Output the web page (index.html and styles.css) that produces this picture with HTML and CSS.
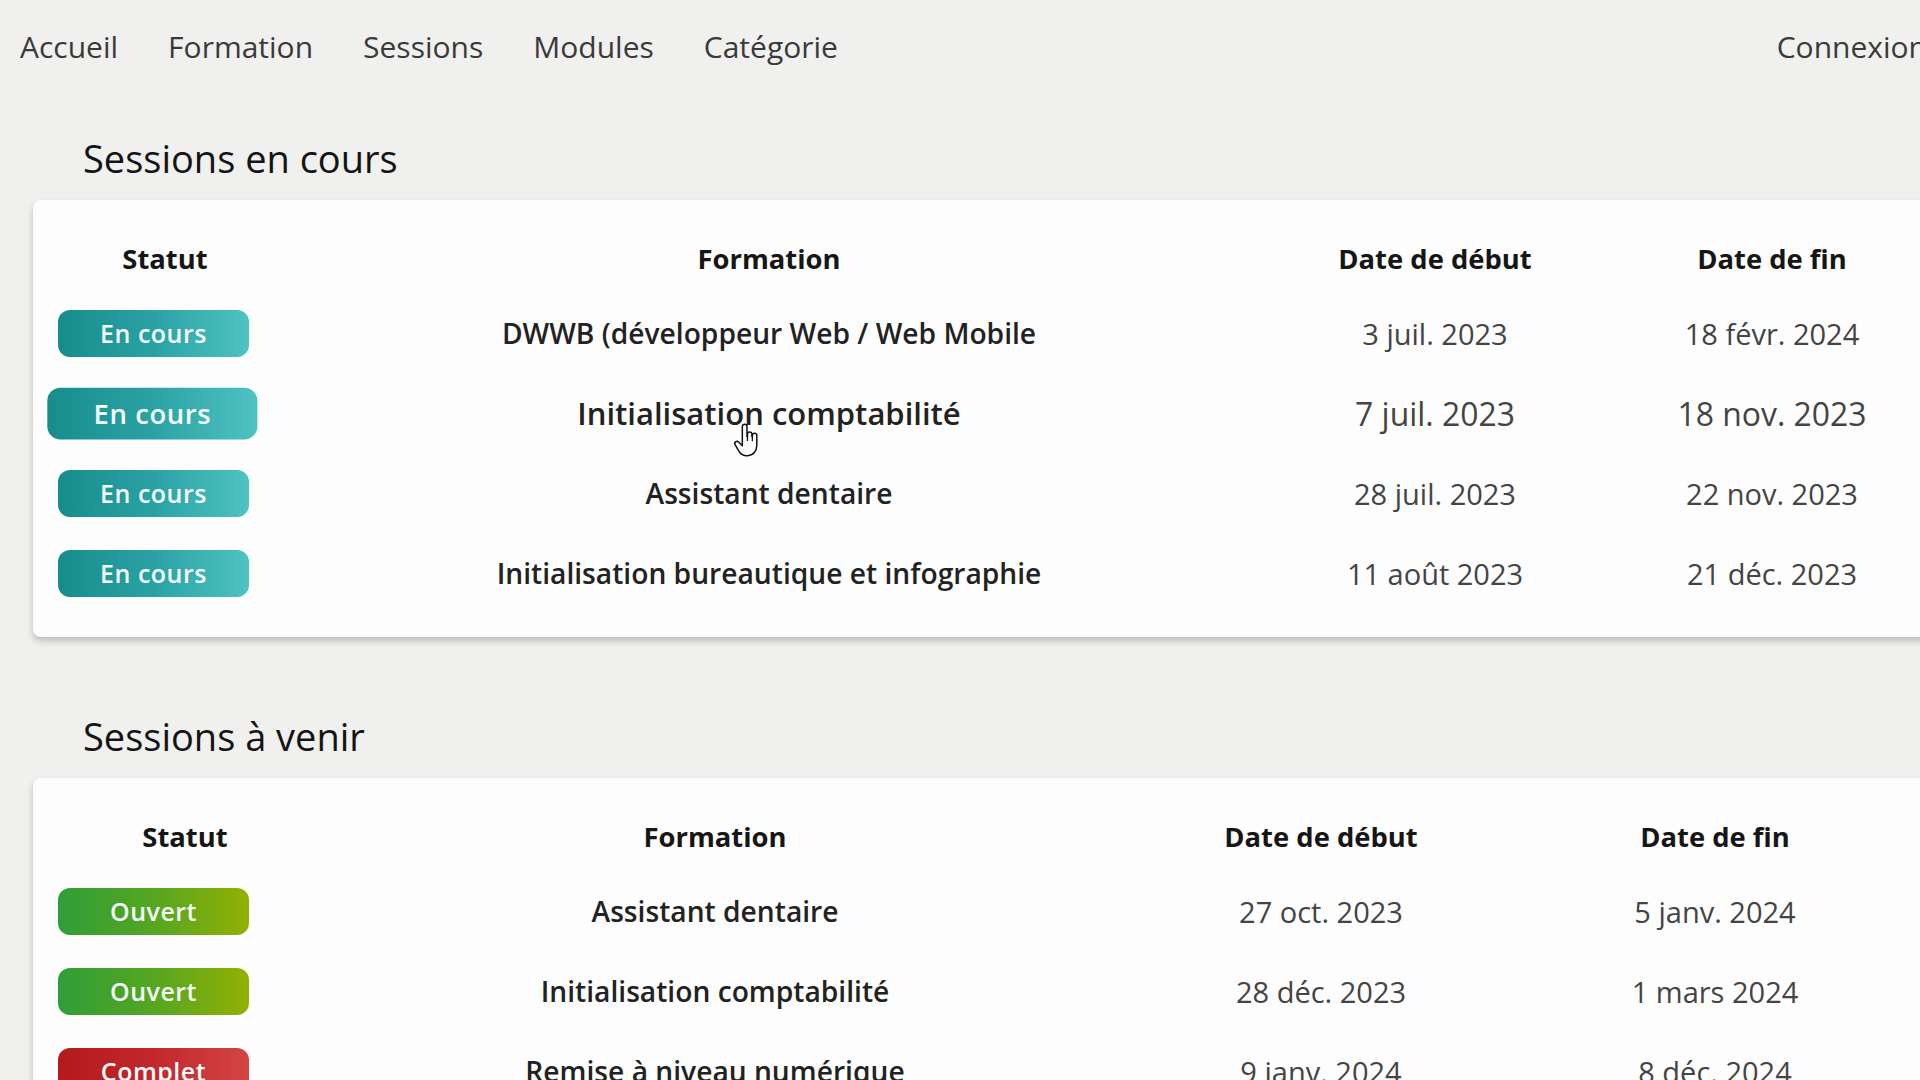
FILE: index.html
```html
<!DOCTYPE html>
<html lang="fr">
<head>
<meta charset="utf-8">
<title>Sessions</title>
<link rel="stylesheet" href="styles.css">
</head>
<body>
<div class="page">
  <nav class="topnav">
    <a class="nav-link">Accueil</a>
    <a class="nav-link">Formation</a>
    <a class="nav-link">Sessions</a>
    <a class="nav-link">Modules</a>
    <a class="nav-link">Catégorie</a>
    <a class="nav-link nav-login">Connexion</a>
  </nav>

  <main class="content">
    <section class="block">
      <h2 class="block-title">Sessions en cours</h2>
      <div class="card">
        <table class="sessions sessions-current">
          <colgroup>
            <col class="cur-c1"><col class="cur-c2"><col class="cur-c3"><col class="cur-c4">
          </colgroup>
          <thead>
            <tr><th>Statut</th><th>Formation</th><th>Date de début</th><th>Date de fin</th></tr>
          </thead>
          <tbody>
            <tr>
              <td class="status"><span class="badge badge-teal">En cours</span></td>
              <td class="name">DWWB (développeur Web / Web Mobile</td>
              <td class="date">3 juil. 2023</td>
              <td class="date">18 févr. 2024</td>
            </tr>
            <tr class="is-hovered">
              <td class="status"><span class="badge badge-teal">En cours</span></td>
              <td class="name">Initialisation comptabilité</td>
              <td class="date">7 juil. 2023</td>
              <td class="date">18 nov. 2023</td>
            </tr>
            <tr>
              <td class="status"><span class="badge badge-teal">En cours</span></td>
              <td class="name">Assistant dentaire</td>
              <td class="date">28 juil. 2023</td>
              <td class="date">22 nov. 2023</td>
            </tr>
            <tr>
              <td class="status"><span class="badge badge-teal">En cours</span></td>
              <td class="name">Initialisation bureautique et infographie</td>
              <td class="date">11 août 2023</td>
              <td class="date">21 déc. 2023</td>
            </tr>
          </tbody>
        </table>
      </div>
    </section>

    <section class="block">
      <h2 class="block-title">Sessions à venir</h2>
      <div class="card">
        <table class="sessions sessions-next">
          <colgroup>
            <col class="nxt-c1"><col class="nxt-c2"><col class="nxt-c3"><col class="nxt-c4">
          </colgroup>
          <thead>
            <tr><th>Statut</th><th>Formation</th><th>Date de début</th><th>Date de fin</th></tr>
          </thead>
          <tbody>
            <tr>
              <td class="status"><span class="badge badge-green">Ouvert</span></td>
              <td class="name">Assistant dentaire</td>
              <td class="date">27 oct. 2023</td>
              <td class="date">5 janv. 2024</td>
            </tr>
            <tr>
              <td class="status"><span class="badge badge-green">Ouvert</span></td>
              <td class="name">Initialisation comptabilité</td>
              <td class="date">28 déc. 2023</td>
              <td class="date">1 mars 2024</td>
            </tr>
            <tr>
              <td class="status"><span class="badge badge-red">Complet</span></td>
              <td class="name">Remise à niveau numérique</td>
              <td class="date">9 janv. 2024</td>
              <td class="date">8 déc. 2024</td>
            </tr>
          </tbody>
        </table>
      </div>
    </section>
  </main>

  <svg class="cursor-hand" viewBox="0 0 24 30" width="28" height="35" aria-hidden="true">
    <path d="M8 3a2 2 0 0 1 4 0v8.5h.4V9.6a1.9 1.9 0 0 1 3.8 0v2h.4v-1a1.9 1.9 0 0 1 3.8 0V19c0 5-3 9-8 9h-1.2c-2.8 0-4.8-1.4-6.2-3.8L1.8 18.6a1.9 1.9 0 0 1 3-2.3L8 19.5V3z" fill="#fff" stroke="#111" stroke-width="1.3" stroke-linejoin="round"/>
    <path d="M12.4 11.5v4M16.6 11.6v4" stroke="#111" stroke-width="1.1" fill="none"/>
  </svg>
</div>
</body>
</html>
```

FILE: styles.css
```css
html, body {
  margin: 0;
  padding: 0;
  overflow: hidden;
}

body {
  background: #f0f0ee;
  font-family: "Open Sans", "Noto Sans", sans-serif;
  color: #1c1c1c;
}

.page {
  position: relative;
  width: 1960px;
  min-height: 1080px;
}

.topnav {
  display: flex;
  align-items: center;
  gap: 50px;
  height: 92px;
  padding: 0 33px 0 20px;
}

.nav-link {
  font-size: 30px;
  font-weight: 400;
  color: #3a3a3a;
  text-decoration: none;
  cursor: pointer;
}

.nav-login {
  margin-left: auto;
}

.content {
  display: flex;
  flex-direction: column;
  gap: 33px;
  padding-left: 33px;
}

.block-title {
  margin: 42px 0 18px;
  padding-left: 50px;
  font-size: 38px;
  line-height: 48px;
  font-weight: 500;
  color: #141414;
}

.card {
  background: #fdfdfd;
  border-radius: 8px;
  box-shadow: 0 4px 7px rgba(0, 0, 0, 0.22);
  padding: 23px 0 24px 7px;
}

.sessions {
  border-collapse: collapse;
  table-layout: fixed;
}

.sessions-current { width: 1882px; }
.cur-c1 { width: 250px; }
.cur-c2 { width: 958px; }
.cur-c3 { width: 374px; }
.cur-c4 { width: 300px; }

.sessions-next { width: 1848px; }
.nxt-c1 { width: 290px; }
.nxt-c2 { width: 770px; }
.nxt-c3 { width: 442px; }
.nxt-c4 { width: 346px; }

.sessions th {
  height: 70px;
  padding: 0;
  font-size: 27.4px;
  font-weight: 700;
  color: #161616;
  text-align: center;
  vertical-align: middle;
}

.sessions td {
  height: 80px;
  padding: 0;
  text-align: center;
  vertical-align: middle;
  white-space: nowrap;
}

.sessions td.status {
  text-align: left;
  padding-left: 18px;
}

.sessions td.name {
  font-size: 28.2px;
  font-weight: 600;
  color: #222;
}

.sessions td.date {
  font-size: 29px;
  font-weight: 400;
  color: #444;
}

.is-hovered td {
  transform: scale(1.1);
}

.badge {
  display: inline-block;
  width: 191px;
  height: 47px;
  line-height: 47px;
  border-radius: 12px;
  color: #f4fbfb;
  font-size: 25px;
  font-weight: 600;
  letter-spacing: 0.5px;
  text-align: center;
  vertical-align: middle;
}

.badge-teal {
  background: linear-gradient(90deg, #178c8d 0%, #2aa2a3 50%, #4fc2c3 100%);
}

.badge-green {
  background: linear-gradient(90deg, #2f9e37 0%, #5aa71f 55%, #93b000 100%);
}

.badge-red {
  background: linear-gradient(90deg, #b4191c 0%, #c2282b 50%, #d24545 100%);
}

.cursor-hand {
  position: absolute;
  left: 733px;
  top: 423px;
}
```
